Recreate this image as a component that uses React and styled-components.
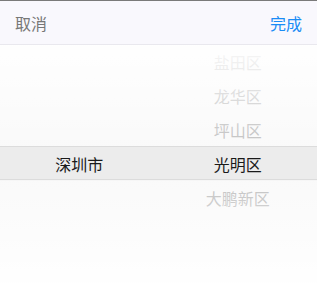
import React from "react";
import styled, { createGlobalStyle } from "styled-components";

const Global = createGlobalStyle`
  html, body { margin: 0; padding: 0; background: #fff; }
  body { font-family: "Noto Sans CJK SC", "Noto Sans", sans-serif; }
`;

const Sheet = styled.div`
  width: 317px;
  height: 283px;
  display: flex;
  flex-direction: column;
  border-top: 1px solid #7a7a7a;
  box-sizing: border-box;
  overflow: hidden;
`;

const Header = styled.div`
  height: 43px;
  flex: none;
  display: flex;
  align-items: center;
  justify-content: space-between;
  padding: 0 15px;
  background: #f9f8fd;
  border-bottom: 1px solid #e9e8ee;
`;

const HeaderButton = styled.span`
  font-size: 16px;
  line-height: 20px;
  color: ${(p) => (p.$primary ? "#1a8cf5" : "#777")};
`;

const Body = styled.div`
  position: relative;
  flex: 1;
  display: grid;
  grid-template-columns: 1fr 1fr;
  background: #f6f6f6;
`;

const Column = styled.div`
  display: flex;
  flex-direction: column;
`;

const Item = styled.div`
  height: 34px;
  flex: none;
  display: flex;
  align-items: center;
  justify-content: center;
  font-size: 16px;
  color: ${(p) => (p.$active ? "#1a1a1a" : "#999")};
  position: relative;
  z-index: ${(p) => (p.$active ? 2 : 0)};
`;

const Highlight = styled.div`
  position: absolute;
  left: 0;
  right: 0;
  top: 101px;
  height: 34px;
  box-sizing: border-box;
  background: #ececec;
  border-top: 1px solid #dcdcdc;
  border-bottom: 1px solid #dcdcdc;
  z-index: 0;
`;

const Fade = styled.div`
  position: absolute;
  left: 0;
  right: 0;
  height: 101px;
  z-index: 1;
  pointer-events: none;
  ${(p) =>
    p.$bottom
      ? "bottom: 0; height: 102px; background: linear-gradient(0deg, rgba(255,255,255,0.95), rgba(255,255,255,0.4));"
      : "top: 0; background: linear-gradient(180deg, rgba(255,255,255,0.95), rgba(255,255,255,0.4));"}
`;

const Slot = styled.div`
  height: 34px;
  flex: none;
`;

const provinces = ["深圳市"];
const districts = ["盐田区", "龙华区", "坪山区", "光明区", "大鹏新区"];

export default function App() {
  return (
    <>
      <Global />
      <Sheet>
        <Header>
          <HeaderButton>取消</HeaderButton>
          <HeaderButton $primary>完成</HeaderButton>
        </Header>
        <Body>
          <Highlight />
          <Fade />
          <Fade $bottom />
          <Column>
            <Slot />
            <Slot />
            <Slot />
            {provinces.map((t) => (
              <Item key={t} $active>
                {t}
              </Item>
            ))}
          </Column>
          <Column>
            {districts.map((t, i) => (
              <Item key={t} $active={i === 3}>
                {t}
              </Item>
            ))}
          </Column>
        </Body>
      </Sheet>
    </>
  );
}
